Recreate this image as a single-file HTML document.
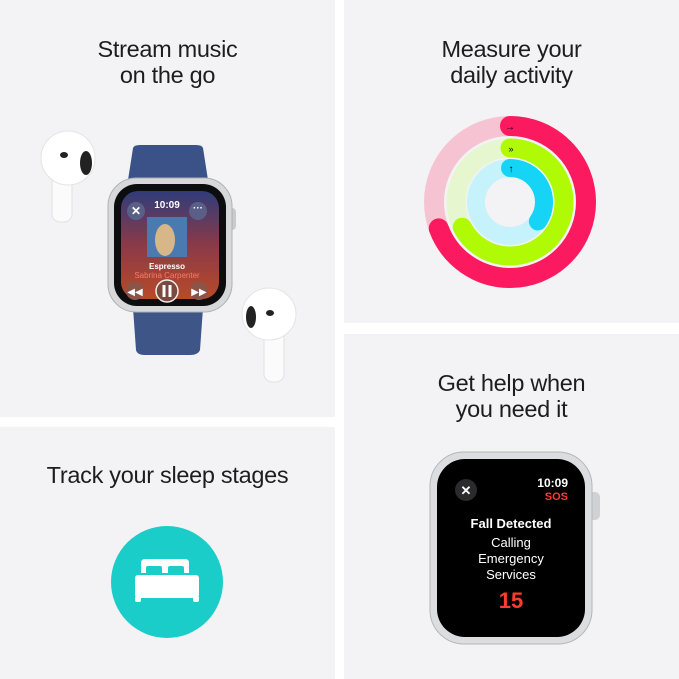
<!DOCTYPE html>
<html><head><meta charset="utf-8"><style>
*{margin:0;padding:0;box-sizing:border-box}
body{width:679px;height:679px;background:#fff;position:relative;overflow:hidden;font-family:"Liberation Sans",sans-serif}
.p{position:absolute;background:#f3f3f5}
.t{position:absolute;text-align:center;color:#1d1d1f;font-size:23.5px;line-height:26px;letter-spacing:-0.3px}
</style></head><body>
<div class="p" style="left:0;top:0;width:335px;height:417px"></div>
<div class="p" style="left:0;top:427px;width:335px;height:252px"></div>
<div class="p" style="left:344px;top:0;width:335px;height:323px"></div>
<div class="p" style="left:344px;top:334px;width:335px;height:345px"></div>

<div class="t" style="left:0;width:335px;top:36px">Stream music<br>on the go</div>
<div class="t" style="left:344px;width:335px;top:36px">Measure your<br>daily activity</div>
<div class="t" style="left:344px;width:335px;top:370px">Get help when<br>you need it</div>
<div class="t" style="left:0;width:335px;top:462px">Track your sleep stages</div>

<svg style="position:absolute;left:0;top:0" width="679" height="679">
<defs>
<linearGradient id="scr" x1="0" y1="0" x2="0" y2="1"><stop offset="0" stop-color="#2f3c7a"/><stop offset="0.5" stop-color="#8a3a48"/><stop offset="1" stop-color="#b84a28"/></linearGradient>
</defs>
<!-- left airpod -->
<rect x="52" y="172" width="20" height="50" rx="8" fill="#fbfbfb" stroke="#e2e2e2"/>
<ellipse cx="68" cy="158" rx="27" ry="27" fill="#fff" stroke="#e4e4e4"/>
<ellipse cx="86" cy="163" rx="6" ry="12" fill="#222"/>
<ellipse cx="64" cy="155" rx="4" ry="3" fill="#222"/>
<!-- right airpod -->
<rect x="264" y="320" width="20" height="62" rx="8" fill="#fbfbfb" stroke="#e2e2e2"/>
<ellipse cx="269" cy="314" rx="27" ry="26" fill="#fff" stroke="#e4e4e4"/>
<ellipse cx="251" cy="317" rx="5" ry="11" fill="#222"/>
<ellipse cx="270" cy="313" rx="4" ry="3" fill="#222"/>
<!-- watch band -->
<path d="M133 148 Q134 145 140 145 L196 145 Q202 145 203 148 L208 180 L128 180 Z" fill="#3b5288"/>
<path d="M133 308 L203 308 L200 350 Q198 355 190 355 L145 355 Q137 355 136 350 Z" fill="#3e5588"/>
<!-- watch -->
<rect x="228" y="208" width="8" height="22" rx="4" fill="#c8cacd"/>
<rect x="108" y="178" width="124" height="134" rx="28" fill="#d6d8da" stroke="#aeb0b3"/>
<rect x="114" y="184" width="112" height="122" rx="23" fill="#0d0d10"/>
<rect x="121" y="191" width="98" height="108" rx="17" fill="url(#scr)"/>
<circle cx="136" cy="211" r="9" fill="#5a5f88"/>
<text x="136" y="215" font-size="12" fill="#fff" text-anchor="middle" font-weight="bold">✕</text>
<circle cx="198" cy="211" r="9" fill="#5a5f88"/>
<text x="198" y="211" font-size="10" fill="#fff" text-anchor="middle" font-weight="bold">···</text>
<text x="167" y="208" font-size="10" fill="#fff" text-anchor="middle" font-weight="bold">10:09</text>
<rect x="147" y="217" width="40" height="40" fill="#4a7ab0"/>
<ellipse cx="165" cy="240" rx="10" ry="16" fill="#d7b68a"/>
<text x="167" y="269" font-size="8" fill="#fff" text-anchor="middle" font-weight="bold">Espresso</text>
<text x="167" y="278" font-size="8" fill="#ff7a64" text-anchor="middle">Sabrina Carpenter</text>
<circle cx="135" cy="291" r="9" fill="#8a5548"/>
<circle cx="199" cy="291" r="9" fill="#8a5548"/>
<circle cx="167" cy="291" r="11" fill="#7a4a3e" stroke="#eee" stroke-width="1.5"/>
<rect x="162.5" y="285" width="3" height="12" fill="#fff"/><rect x="168.5" y="285" width="3" height="12" fill="#fff"/>
<text x="135" y="295" font-size="10" fill="#fff" text-anchor="middle">◀◀</text>
<text x="199" y="295" font-size="10" fill="#fff" text-anchor="middle">▶▶</text>

<!-- rings -->
<g transform="translate(510,202) rotate(-90)" fill="none" stroke-linecap="round">
<circle r="76" stroke="#f6c3d2" stroke-width="20"/>
<circle r="76" stroke="#fb1a5f" stroke-width="20" stroke-dasharray="331 1000"/>
<circle r="54" stroke="#e6f6cf" stroke-width="19"/>
<circle r="54" stroke="#b0fa06" stroke-width="19" stroke-dasharray="228 1000"/>
<circle r="34" stroke="#c6f2fb" stroke-width="18"/>
<circle r="34" stroke="#16d4f5" stroke-width="18" stroke-dasharray="74 1000"/>
</g>
<text x="510" y="130" font-size="10" text-anchor="middle">→</text>
<text x="511" y="152" font-size="9" text-anchor="middle">»</text>
<text x="511" y="172" font-size="10" text-anchor="middle">↑</text>

<!-- sos watch -->
<rect x="588" y="492" width="12" height="28" rx="5" fill="#cfd1d4"/>
<rect x="430" y="452" width="162" height="192" rx="34" fill="#dcdde0" stroke="#b4b6b9"/>
<rect x="437" y="459" width="148" height="178" rx="28" fill="#000"/>
<circle cx="466" cy="490" r="11" fill="#2b2b2e"/>
<text x="466" y="495" font-size="13" fill="#fff" text-anchor="middle" font-weight="bold">✕</text>
<text x="568" y="487" font-size="12" fill="#fff" text-anchor="end" font-weight="bold">10:09</text>
<text x="568" y="500" font-size="11" fill="#ff3b30" text-anchor="end" font-weight="bold">SOS</text>
<text x="511" y="528" font-size="13" fill="#fff" text-anchor="middle" font-weight="bold">Fall Detected</text>
<text x="511" y="547" font-size="13" fill="#fff" text-anchor="middle">Calling</text>
<text x="511" y="563" font-size="13" fill="#fff" text-anchor="middle">Emergency</text>
<text x="511" y="579" font-size="13" fill="#fff" text-anchor="middle">Services</text>
<text x="511" y="608" font-size="22" fill="#ff3b30" text-anchor="middle" font-weight="bold">15</text>

<!-- bed -->
<circle cx="167" cy="582" r="56" fill="#1bcdc8"/>
<path d="M141 573 L141 563 Q141 559 145 559 L185 559 Q189 559 189 563 L189 573 Z" fill="#fff"/>
<rect x="146" y="566" width="16" height="8" rx="2" fill="#1bcdc8"/>
<rect x="168" y="566" width="16" height="8" rx="2" fill="#1bcdc8"/>
<rect x="135" y="575" width="64" height="23" rx="3" fill="#fff"/>
<rect x="135" y="596" width="6" height="6" rx="2" fill="#fff"/>
<rect x="193" y="596" width="6" height="6" rx="2" fill="#fff"/>
</svg>
</body></html>
